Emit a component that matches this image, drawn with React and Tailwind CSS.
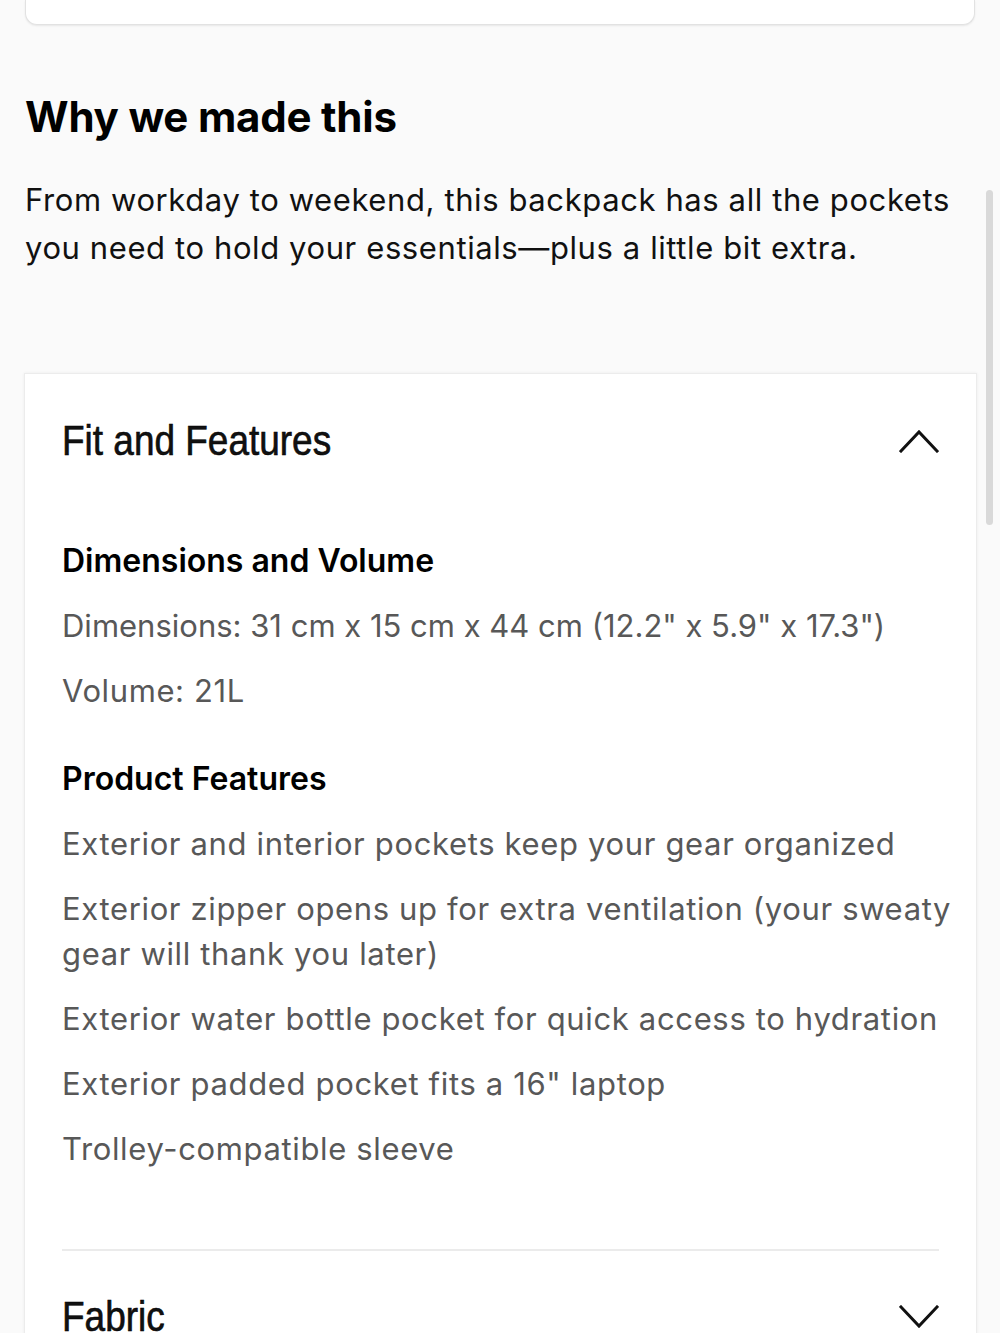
const features = [
  "Exterior and interior pockets keep your gear organized",
  "Exterior zipper opens up for extra ventilation (your sweaty gear will thank you later)",
  "Exterior water bottle pocket for quick access to hydration",
  'Exterior padded pocket fits a 16" laptop',
  "Trolley-compatible sleeve",
];

function Chevron({ up }) {
  return (
    <svg width="40" height="24" viewBox="0 0 40 24" fill="none" stroke="#111" strokeWidth="3" strokeLinecap="square">
      {up ? <path d="M2 22 L20 3 L38 22" /> : <path d="M2 2 L20 21 L38 2" />}
    </svg>
  );
}

function PanelTitle({ children }) {
  return (
    <h3
      className="inline-block origin-left scale-x-[0.88] text-[42px] leading-[44px] [-webkit-text-stroke:0.6px_#000]"
      style={{ fontFamily: "'Liberation Sans', Arial, sans-serif" }}
    >
      {children}
    </h3>
  );
}

export default function App() {
  return (
    <div
      className="relative min-h-[1333px] overflow-hidden bg-[#fafafa] text-[#111]"
      style={{ fontFamily: "Inter, 'Liberation Sans', sans-serif" }}
    >
      <div className="mx-[25px] h-[25px] rounded-b-xl border border-t-0 border-[#e2e2e2] bg-white shadow-[0_1px_2px_rgba(0,0,0,0.08)]" />

      <section className="px-[25px] pt-[64px]">
        <h2 className="text-[42px] font-bold leading-[56px] tracking-[-0.2px] text-black">Why we made this</h2>
        <p className="mt-[31px] text-[31px] leading-[48px] tracking-[0.6px]">
          From workday to weekend, this backpack has all the pockets you need to hold your essentials—plus a little bit extra.
        </p>
      </section>

      <div className="mx-[24px] mr-[23px] mt-[101px] border border-[#ececec] bg-white px-[37px] shadow-[0_0_3px_rgba(0,0,0,0.06)]">
        <div className="flex items-center justify-between pt-[45px]">
          <PanelTitle>Fit and Features</PanelTitle>
          <Chevron up />
        </div>

        <div className="-mr-[24px] pt-[76px]">
          <h4 className="text-[32px] font-semibold leading-[44px] text-black">Dimensions and Volume</h4>
          <ul className="mt-[20px] flex flex-col gap-[20px] text-[31px] leading-[45px] text-[#585858]">
            <li>Dimensions: 31 cm x 15 cm x 44 cm (12.2" x 5.9" x 17.3")</li>
            <li className="tracking-[0.6px]">Volume: 21L</li>
          </ul>

          <h4 className="mt-[44px] text-[32px] font-semibold leading-[44px] text-black">Product Features</h4>
          <ul className="mt-[20px] flex flex-col gap-[20px] text-[31px] leading-[45px] tracking-[0.65px] text-[#585858]">
            {features.map((f) => (
              <li key={f}>{f}</li>
            ))}
          </ul>
        </div>

        <div className="mt-[78px] h-[2px] bg-[#ebebeb]" />

        <div className="flex items-center justify-between pt-[44px] pb-[40px]">
          <PanelTitle>Fabric</PanelTitle>
          <Chevron />
        </div>
      </div>

      <div className="absolute right-[7px] top-[190px] h-[335px] w-[7px] rounded-full bg-[#d9d9d9]" />
    </div>
  );
}
